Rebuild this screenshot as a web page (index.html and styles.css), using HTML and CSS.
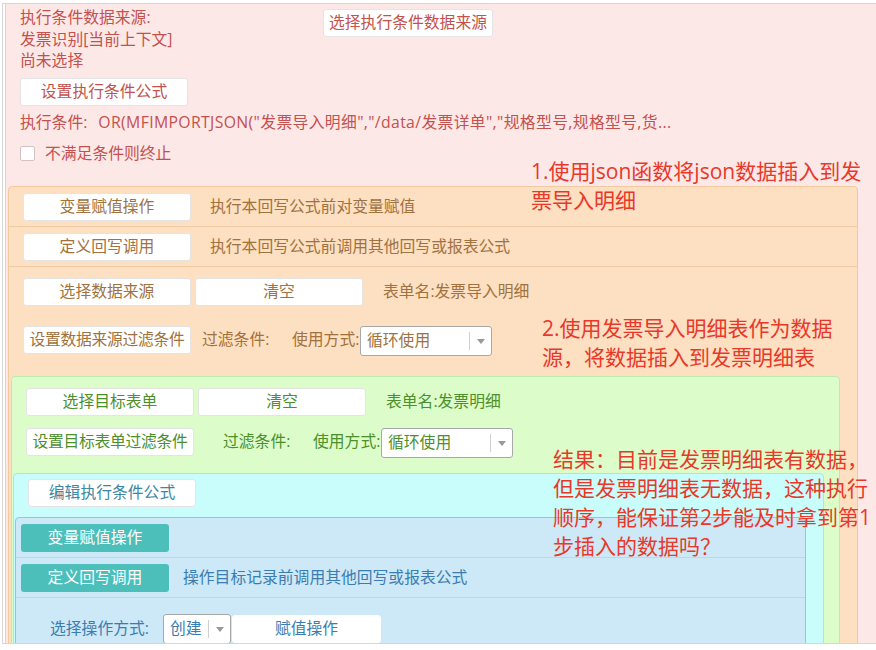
FILE: index.html
```html
<!DOCTYPE html>
<html lang="zh-CN">
<head>
  <meta charset="UTF-8">
  <title>回写公式设置</title>
  <link rel="stylesheet" href="styles.css">
</head>
<body>

<div class="frame">
  <div class="box box-pink">
    <div class="pink-body">
      <div class="src-row">
        <div class="src-info">
          <div>执行条件数据来源:</div>
          <div>发票识别[当前上下文]</div>
          <div>尚未选择</div>
        </div>
        <button class="btn btn-src">选择执行条件数据来源</button>
      </div>
      <button class="btn btn-formula">设置执行条件公式</button>
      <div class="cond-line">执行条件:<span class="cond-expr">OR(MFIMPORTJSON("发票导入明细","/data/发票详单","规格型号,规格型号,货...</span></div>
      <label class="check-row"><span class="checkbox"></span>不满足条件则终止</label>
    </div>

    <div class="box box-peach">
      <div class="row row-sep">
        <button class="btn">变量赋值操作</button>
        <span class="note">执行本回写公式前对变量赋值</span>
      </div>
      <div class="row row-sep">
        <button class="btn">定义回写调用</button>
        <span class="note">执行本回写公式前调用其他回写或报表公式</span>
      </div>
      <div class="row row-first">
        <button class="btn">选择数据来源</button>
        <button class="btn btn-clear">清空</button>
        <span class="form-name">表单名:发票导入明细</span>
      </div>
      <div class="row row-next">
        <button class="btn btn-tight">设置数据来源过滤条件</button>
        <span class="filter">过滤条件:</span>
        <span class="usage">使用方式:</span>
        <div class="select"><span class="select-text">循环使用</span><span class="select-arrow"></span></div>
      </div>

      <div class="box box-green">
        <div class="row row-first">
          <button class="btn">选择目标表单</button>
          <button class="btn btn-clear">清空</button>
          <span class="form-name">表单名:发票明细</span>
        </div>
        <div class="row row-gap">
          <button class="btn btn-tight">设置目标表单过滤条件</button>
          <span class="filter filter-wide">过滤条件:</span>
          <span class="usage">使用方式:</span>
          <div class="select"><span class="select-text">循环使用</span><span class="select-arrow"></span></div>
        </div>

        <div class="box box-cyan">
          <div class="row row-cyan">
            <button class="btn">编辑执行条件公式</button>
          </div>

          <div class="box box-blue">
            <div class="row row-sep row-blue">
              <button class="btn btn-teal">变量赋值操作</button>
            </div>
            <div class="row row-sep row-blue">
              <button class="btn btn-teal">定义回写调用</button>
              <span class="note note-blue">操作目标记录前调用其他回写或报表公式</span>
            </div>
            <div class="row row-op">
              <span class="op-label">选择操作方式:</span>
              <div class="select select-small"><span class="select-text">创建</span><span class="select-arrow"></span></div>
              <button class="btn btn-assign">赋值操作</button>
            </div>
          </div>
        </div>
      </div>
    </div>
  </div>

  <div class="remark remark-1">1.使用json函数将json数据插入到发<br>票导入明细</div>
  <div class="remark remark-2">2.使用发票导入明细表作为数据<br>源，将数据插入到发票明细表</div>
  <div class="remark remark-3">结果：目前是发票明细表有数据，<br>但是发票明细表无数据，这种执行<br>顺序，能保证第2步能及时拿到第1<br>步插入的数据吗？</div>
</div>

</body>
</html>
```

FILE: styles.css
```css
body {
  margin: 0;
  background: #fff;
  font-family: "Open Sans", "Noto Sans CJK SC", sans-serif;
  font-size: 15.8px;
  line-height: 21.5px;
}
.frame {
  position: relative;
  margin: 3px 0 0 2px;
  height: 639px;
  overflow: hidden;
  border-left: 1px solid #d6d6d6;
  border-top: 1px solid #d6d6d6;
  border-bottom: 1px solid #d6d6d6;
}
.box {
  border: 1px solid;
  border-radius: 4px;
}
.box-pink {
  margin-left: 2px;
  min-height: 100%;
  background: #fde8e8;
  border-color: #f2cccc;
  border-top: none;
  border-right: none;
  border-radius: 0;
  color: #c4514d;
}
.pink-body {
  padding: 3px 0 21px 14px;
}
.src-row {
  display: flex;
  align-items: flex-start;
}
.src-info {
  width: 303px;
}
.btn {
  width: 168px;
  height: 28px;
  padding: 0;
  background: #fff;
  border: 1px solid #e4e4e4;
  border-radius: 3px;
  font: inherit;
  color: inherit;
  cursor: pointer;
}
.btn-src {
  width: 170px;
  margin-top: 2px;
}
.btn-formula {
  display: block;
  margin-top: 6px;
}
.cond-line {
  margin-top: 6px;
}
.cond-expr {
  margin-left: 11px;
  letter-spacing: 0.35px;
}
.check-row {
  display: flex;
  align-items: center;
  margin-top: 10px;
}
.checkbox {
  width: 13px;
  height: 13px;
  margin-right: 10px;
  background: #fff;
  border: 1px solid #d2c4c4;
  border-radius: 2px;
}

.box-peach {
  margin: 0 18px 0 2px;
  background: #fddfc1;
  border-color: #f3c9a0;
  color: #a07240;
}
.row {
  display: flex;
  align-items: center;
  padding: 0 14px;
}
.row-sep {
  padding-top: 6px;
  padding-bottom: 5px;
  border-bottom: 1px solid #f1cba5;
}
.row-first {
  padding-top: 11px;
}
.row-next {
  margin-top: 18px;
}
.note {
  margin-left: 19px;
}
.btn-clear {
  margin-left: 4px;
}
.form-name {
  margin-left: 20px;
}
.btn-tight {
  letter-spacing: -0.3px;
}
.filter {
  margin-left: 11px;
  width: 90px;
}
.filter-wide {
  margin-left: 29px;
}
.usage {
  width: 68px;
}
.select {
  display: flex;
  align-items: center;
  width: 130px;
  height: 28px;
  margin-top: 2px;
  background: #fff;
  border: 1px solid #a8a8a8;
  border-radius: 3px;
}
.select-text {
  flex: 1;
  padding-left: 6px;
}
.select-arrow {
  position: relative;
  width: 21px;
  height: 18px;
  border-left: 1px solid #d0d0d0;
}
.select-arrow::after {
  content: "";
  position: absolute;
  left: 7px;
  top: 7px;
  border-left: 4px solid transparent;
  border-right: 4px solid transparent;
  border-top: 5px solid #999;
}

.box-green {
  margin: 20px 17px 0 2px;
  background: #dcfdc9;
  border-color: #b9ecaa;
  color: #4d8f2b;
}
.row-gap {
  margin-top: 10px;
}
.box-cyan {
  margin: 15px 15px 0 1px;
  background: #c9fdfc;
  border-color: #a4e6ee;
  color: #3a87a4;
}
.row-cyan {
  padding-top: 5px;
}
.box-blue {
  margin: 10px 17px 0 1px;
  background: #cde8f6;
  border-color: #8ec7e6;
  color: #3a7db0;
}
.row-blue {
  padding-left: 5px;
}
.btn-teal {
  width: 148px;
  background: #4cbfbb;
  border: none;
  color: #fff;
}
.note-blue {
  margin-left: 14px;
}
.row-op {
  padding: 16px 0 20px 34px;
}
.op-label {
  width: 113px;
}
.select-small {
  width: 66px;
  margin-top: 0;
}
.btn-assign {
  width: 149px;
  margin-left: 1px;
  border-color: #fff;
}

.remark {
  position: absolute;
  color: #e8382a;
  font-size: 21px;
  line-height: 29px;
  white-space: nowrap;
}
.remark-1 {
  left: 528px;
  top: 153px;
}
.remark-2 {
  left: 539px;
  top: 310px;
}
.remark-3 {
  left: 550px;
  top: 441px;
}
```
